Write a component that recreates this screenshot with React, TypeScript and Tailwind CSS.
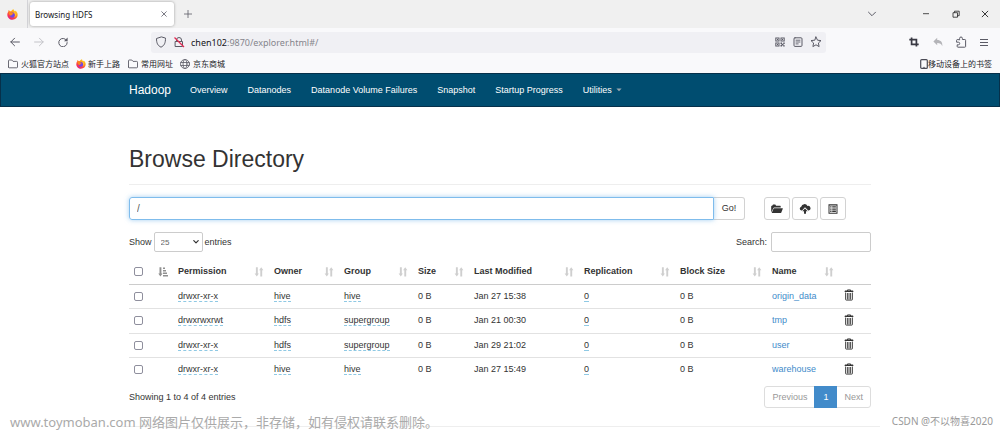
import React, { useState } from "react";

type IconProps = { className?: string };

const line = {
  fill: "none",
  stroke: "currentColor",
  strokeWidth: 1.2,
  strokeLinecap: "round" as const,
  strokeLinejoin: "round" as const,
};

function FirefoxLogo({ className = "size-3" }: IconProps) {
  return (
    <svg viewBox="0 0 24 24" className={className} aria-hidden="true">
      <defs>
        <linearGradient id="fox-body" x1="0.9" y1="0.05" x2="0.25" y2="1">
          <stop offset="0" stopColor="#ffe226" />
          <stop offset="0.35" stopColor="#ff9a1f" />
          <stop offset="0.65" stopColor="#ff4a3d" />
          <stop offset="1" stopColor="#e31587" />
        </linearGradient>
      </defs>
      <path
        fill="url(#fox-body)"
        d="M14.5 0.5c.3 2.3 1.6 3.600 3 5 .8-.3 1-1.200 1-2 3 2.500 4.800 6 4.800 9.300C23.300 19 18.300 23.500 12 23.500S.7 18.800.7 12.500C.7 9.500 1.700 7.200 3 5.500c0-1.200.2-2.300.8-3.200C4.800 3 5.600 4 6 5c1-.3 2-.3 3 0 1-2 3-4 5.500-4.500z"
      />
      <circle cx="11.800" cy="13" r="5.600" fill="#7542e5" />
      <path fill="#ff8a16" d="M3.500 8c2.500-1.300 5-1.200 7 .3 1.200.8 2.800.7 3.500 1.500-.5 1.400-2.700 1.400-3.500 2.700-.5 1.500-1.800 2.300-3.600 1.700C5.500 13 4.500 10.500 3.500 8z" />
      <path fill="#ffd02b" d="M15 6c3.500 1.500 5 5 4 8.500-.6 2-2 3.500-3.500 4.200 2-2.500 2.600-5.500 1.500-8C16.500 9 15.500 7.500 15 6z" />
    </svg>
  );
}

function BackIcon({ className = "size-2.5" }: IconProps) {
  return (
    <svg viewBox="0 0 10 10" className={className} aria-hidden="true">
      <path {...line} strokeWidth="1" d="M9.400 5H.8M4.600 1.200.8 5l3.800 3.800" />
    </svg>
  );
}

function ForwardIcon({ className = "size-2.5" }: IconProps) {
  return (
    <svg viewBox="0 0 10 10" className={className} aria-hidden="true">
      <path {...line} strokeWidth="1" d="M.6 5h8.600M5.400 1.200 9.200 5 5.400 8.800" />
    </svg>
  );
}

function ReloadIcon() {
  return (
    <svg viewBox="0 0 10 10" className="size-2.5" aria-hidden="true">
      <path {...line} strokeWidth="1" d="M8.800 3.800A4.200 4.200 0 1 0 9.200 5.600" />
      <path fill="currentColor" d="M9.600.6v3.600H6z" />
    </svg>
  );
}

function ShieldIcon() {
  return (
    <svg viewBox="0 0 12 12" className="size-3" aria-hidden="true">
      <path {...line} strokeWidth="1" d="M6 1 1.500 2.500c0 4.300 1 7 4.500 8.700 3.500-1.700 4.500-4.400 4.500-8.700z" />
    </svg>
  );
}

function InsecureIcon() {
  return (
    <svg viewBox="0 0 12 12" className="size-3" aria-hidden="true">
      <path {...line} strokeWidth="1" d="M3.500 5.500V4a2.500 2.500 0 0 1 5 0v1.500M2.500 5.500h7v5h-7z" />
      <path d="M1.500 1.500l9.500 9.500" stroke="#e22850" strokeWidth="1.200" />
    </svg>
  );
}

function QrIcon() {
  return (
    <svg viewBox="0 0 10 10" className="size-2.5" aria-hidden="true">
      <path
        fill="currentColor"
        fillRule="evenodd"
        d="M.3.5h4.200v4H.3zM1.300 1.500v2h2.200v-2zM5.500.5h4.200v4H5.500zM6.500 1.500v2h2.200v-2zM.3 5.500h4.200v4H.3zM1.300 6.500v2h2.200v-2zM5.500 5.500H7v1.300h1.300V5.500h1.400v1.500H8.500v1.200h1.200v1.300H8.200V8.500H7v1H5.500V8h1V7h-1z"
      />
      <path fill="currentColor" d="M2 2h1v1H2zM7 2h1v1H7zM2 7h1v1H2z" />
    </svg>
  );
}

function ReaderIcon() {
  return (
    <svg viewBox="0 0 10 10" className="size-2.5" aria-hidden="true">
      <rect {...line} strokeWidth="1" x="1" y=".8" width="8" height="8.600" rx="1" />
      <path {...line} strokeWidth=".9" d="M3 3.200h4M3 5h4M3 6.900h2.200" />
    </svg>
  );
}

function StarIcon() {
  return (
    <svg viewBox="0 0 12 12" className="size-3" aria-hidden="true">
      <path {...line} strokeWidth="1" d="m6 1 1.500 3.200 3.500.4-2.600 2.400.7 3.600L6 8.800l-3.100 1.800.7-3.600L1 4.600l3.500-.4z" />
    </svg>
  );
}

function CropIcon() {
  return (
    <svg viewBox="0 0 10 10" className="size-2.5" aria-hidden="true">
      <path fill="none" stroke="currentColor" strokeWidth="1.700" d="M2.600.5v6.800H9.700M.3 2.600h7.100v7" />
    </svg>
  );
}

function UndoIcon() {
  return (
    <svg viewBox="0 0 10 10" className="size-2.5" aria-hidden="true">
      <path fill="currentColor" d="M4.200.7v2.200c3.600.1 5.500 1.900 5.100 6.400C8.500 7 7 6 4.200 6v2.200L.4 4.400z" />
    </svg>
  );
}

function PuzzleIcon() {
  return (
    <svg viewBox="0 0 12 12" className="size-3" aria-hidden="true">
      <path
        {...line}
        strokeWidth="1"
        d="M4.600 3.500V2.400a1.400 1.400 0 0 1 2.800 0v1.100h2.400q.8 0 .8.8v6.200q0 .7-.8.7H3q-.8 0-.8-.7V8.800h1.200a1.300 1.300 0 0 0 0-2.600H1.600V4.300q0-.8.8-.8z"
      />
    </svg>
  );
}

function MenuIcon() {
  return (
    <svg viewBox="0 0 8 8" className="size-2" aria-hidden="true">
      <path stroke="currentColor" strokeWidth="1" d="M0 1.500h8M0 4.500h8M0 7.500h8" />
    </svg>
  );
}

function FolderIcon() {
  return (
    <svg viewBox="0 0 10 10" className="size-2.5 text-[#5b5b66]" aria-hidden="true">
      <path {...line} strokeWidth=".9" d="M.5 8V1.800q0-.8.8-.8h2.500l1.200 1.400h3.700q.8 0 .8.8V8q0 .8-.8.8H1.300Q.5 8.800.5 8z" />
    </svg>
  );
}

function GlobeIcon() {
  return (
    <svg viewBox="0 0 10 10" className="size-2.5 text-[#5b5b66]" aria-hidden="true">
      <g {...line} strokeWidth=".8">
        <circle cx="5" cy="5" r="4.500" />
        <ellipse cx="5" cy="5" rx="2" ry="4.500" />
        <path d="M.8 3.500h8.400M.8 6.500h8.400" />
      </g>
    </svg>
  );
}

function PhoneIcon() {
  return (
    <svg viewBox="0 0 8 10" className="h-2.5 w-2 text-[#4a4a55]" aria-hidden="true">
      <rect {...line} x=".7" y=".6" width="6.600" height="8.800" rx="1" />
      <path stroke="currentColor" strokeWidth=".8" d="M3.200 8.400h1.600" />
    </svg>
  );
}

function SortIcon() {
  return (
    <svg viewBox="0 0 10 10" className="size-2.5 shrink-0 text-[#cfcfcf]" aria-hidden="true">
      <path fill="currentColor" d="M1.900.3h1.900v6.200h1.100L2.800 9.500.6 6.500h1.300zM6.300 9.500h1.900V3.300h1.200L7.200.3 5.100 3.300h1.200z" />
    </svg>
  );
}

function SortAscIcon() {
  return (
    <svg viewBox="0 0 10 10" className="size-2.5 shrink-0 text-[#909090]" aria-hidden="true">
      <path fill="currentColor" d="M1.500.3h1.900v6.200h1.100L2.400 9.500.3 6.500h1.200zM5 .5h2v1.500H5zM5 3h3v1.500H5zM5 5.500h4V7H5zM5 8h5v1.500H5z" />
    </svg>
  );
}

function FolderOpenIcon() {
  return (
    <svg viewBox="0 0 12 10" className="h-2.5 w-3" aria-hidden="true">
      <path fill="currentColor" d="M.2 8.400V2.200q0-.5.5-.5h.6l.3-.8q.2-.4.6-.4h2q.4 0 .5.4l.3.8h4.200q.5 0 .5.5v1.300H3.200q-.6 0-.8.5z" />
      <path fill="currentColor" d="M3.300 4.300h8.200q.5 0 .3.500L10.300 8.600q-.2.500-.7.500H1.200q-.5 0-.3-.5l1.600-3.800q.2-.5.8-.5z" />
    </svg>
  );
}

function UploadIcon() {
  return (
    <svg viewBox="0 0 12 10" className="h-2.5 w-3" aria-hidden="true">
      <path
        fill="currentColor"
        d="M3 6.600H2.500a2 2 0 0 1-.3-3.900A3.400 3.400 0 0 1 8.500 1.900a2.400 2.400 0 0 1 1.200 4.700H9.200L6 3.200z"
      />
      <path fill="currentColor" d="M6 4.400 8.700 7.200H7v2.500H5V7.200H3.300z" />
    </svg>
  );
}

function ListIcon() {
  return (
    <svg viewBox="0 0 10 10" className="size-2.5" aria-hidden="true">
      <path fill="currentColor" fillRule="evenodd" d="M.5.2h9v9.600h-9zM1.500 1.400v7.400h7V1.400z" />
      <path fill="currentColor" d="M2.200 2.200h1.300v1.300H2.200zM4.200 2.200h3.700v1.300H4.200zM2.200 4.400h1.300v1.300H2.200zM4.200 4.400h3.700v1.300H4.200zM2.200 6.600h1.300v1.300H2.200zM4.200 6.600h3.700v1.300H4.200z" />
    </svg>
  );
}

function TrashIcon() {
  return (
    <svg viewBox="0 0 10 12" className="h-3 w-2.5" aria-hidden="true">
      <path
        fill="none"
        stroke="currentColor"
        strokeWidth=".9"
        d="M3.500 2V.9h3V2M1.600 3.500V10.500q0 .6.600.6h5.600q.6 0 .6-.6V3.500M3.400 4v6.500M5 4v6.500M6.600 4v6.500"
      />
      <path fill="currentColor" d="M1 1.600h8l.5 1.300H.5z" />
    </svg>
  );
}

const navLinks = ["Overview", "Datanodes", "Datanode Volume Failures", "Snapshot", "Startup Progress"];

const columns: { label: string; width: string }[] = [
  { label: "Permission", width: "w-[96px]" },
  { label: "Owner", width: "w-[70px]" },
  { label: "Group", width: "w-[74px]" },
  { label: "Size", width: "w-[56px]" },
  { label: "Last Modified", width: "w-[110px]" },
  { label: "Replication", width: "w-[96px]" },
  { label: "Block Size", width: "w-[92px]" },
  { label: "Name", width: "w-[72px]" },
];

const files = [
  { permission: "drwxr-xr-x", owner: "hive", group: "hive", modified: "Jan 27 15:38", name: "origin_data" },
  { permission: "drwxrwxrwt", owner: "hdfs", group: "supergroup", modified: "Jan 21 00:30", name: "tmp" },
  { permission: "drwxr-xr-x", owner: "hdfs", group: "supergroup", modified: "Jan 29 21:02", name: "user" },
  { permission: "drwxr-xr-x", owner: "hive", group: "hive", modified: "Jan 27 15:49", name: "warehouse" },
];

function BrowserChrome() {
  return (
    <div className="font-['Noto_Sans','Noto_Sans_CJK_SC',sans-serif] text-[#5b5b66]">
      <div className="flex h-7 items-center bg-[#f0f0f0]">
        <div className="flex h-full w-7 items-center border-r border-[#d4d4d8] pl-[7px]">
          <FirefoxLogo className="size-[11px]" />
        </div>
        <div className="ml-[2px] flex h-6 w-36 items-center justify-between rounded-[3px] bg-white pr-[7px] pl-[5px] shadow-[0_0_3px_rgba(0,0,0,0.35)]">
          <span className="text-[8px] text-[#15141a]">Browsing HDFS</span>
          <button aria-label="Close tab">
            <svg viewBox="0 0 6 6" className="size-1.5"><path {...line} strokeWidth=".8" d="m.7.7 4.600 4.600M5.300.7.7 5.300" /></svg>
          </button>
        </div>
        <button aria-label="New tab" className="ml-2.5">
          <svg viewBox="0 0 8 8" className="size-2"><path {...line} strokeWidth=".8" d="M4 .2v7.600M.2 4h7.600" /></svg>
        </button>
        <div className="ml-auto flex items-center pr-[11px]">
          <button aria-label="List all tabs" className="mr-[45px]">
            <svg viewBox="0 0 10 8" className="h-2 w-2.5"><path {...line} strokeWidth="1" d="m1.500 2.200 3.500 3.500 3.500-3.500" /></svg>
          </button>
          <button aria-label="Minimize" className="mr-[22px] text-[#222]">
            <svg viewBox="0 0 8 8" className="size-2"><path stroke="currentColor" strokeWidth=".8" d="M1 3.700h6" /></svg>
          </button>
          <button aria-label="Restore" className="mr-[21px] text-[#222]">
            <svg viewBox="0 0 8 8" className="size-2">
              <path fill="none" stroke="currentColor" strokeWidth=".8" d="M1 2.700h4.500v4.500H1zM2.500 2.700V1.200h4.700v4.500H5.500" />
            </svg>
          </button>
          <button aria-label="Close" className="text-[#222]">
            <svg viewBox="0 0 8 8" className="size-2"><path stroke="currentColor" strokeWidth=".9" d="m.9.900 6.200 6.200M7.100.900.9 7.100" /></svg>
          </button>
        </div>
      </div>

      <div className="flex h-7 items-center bg-[#f9f9fb] pr-3 pl-2.5">
        <button aria-label="Back"><BackIcon /></button>
        <button aria-label="Forward" className="ml-3.5 text-[#c3c3c8]"><ForwardIcon /></button>
        <button aria-label="Reload" className="ml-3.5"><ReloadIcon /></button>
        <div className="ml-[83px] flex h-[21px] flex-1 items-center rounded-[3px] bg-[#f0f0f4] pr-1 pl-1">
          <ShieldIcon />
          <span className="ml-1.5"><InsecureIcon /></span>
          <span className="ml-1.5 flex-1 text-[9px] text-[#85858c]">
            <span className="text-[#15141a]">chen102</span>:9870/explorer.html#/
          </span>
          <button aria-label="QR code"><QrIcon /></button>
          <button aria-label="Reader view" className="ml-2"><ReaderIcon /></button>
          <button aria-label="Bookmark this page" className="ml-[7px]"><StarIcon /></button>
        </div>
        <div className="ml-[83px] flex items-center">
          <button aria-label="Screenshot" className="text-[#3a3a44]"><CropIcon /></button>
          <button aria-label="Undo" className="ml-3.5 text-[#b4b4b8]"><UndoIcon /></button>
          <button aria-label="Extensions" className="ml-3"><PuzzleIcon /></button>
          <button aria-label="Application menu" className="ml-[13px]"><MenuIcon /></button>
        </div>
      </div>

      <div className="flex h-[17px] items-center bg-[#f9f9fb] pr-2 pb-px pl-2 text-[8px] leading-4 text-[#222228]">
        <a href="#" className="flex items-center gap-[3px]"><FolderIcon />火狐官方站点</a>
        <a href="#" className="ml-[7px] flex items-center gap-[2px]"><FirefoxLogo className="size-2.5" />新手上路</a>
        <a href="#" className="ml-2 flex items-center gap-[3px]"><FolderIcon />常用网址</a>
        <a href="#" className="ml-[7px] flex items-center gap-[3px]"><GlobeIcon />京东商城</a>
        <a href="#" className="ml-auto flex items-center"><PhoneIcon />移动设备上的书签</a>
      </div>
    </div>
  );
}

const box = "size-[9px] appearance-none rounded-[2px] border border-[#8f8f9d] bg-white checked:bg-[#428bca] block";
const toolButton = "flex h-[23px] w-[26px] items-center justify-center rounded-[3px] border border-[#d2d2d2] bg-white text-[#333]";
const tip = "border-b border-dashed border-[#8fc9e4]";

export default function App() {
  const [path, setPath] = useState("/");
  const [query, setQuery] = useState("");

  return (
    <div className="relative min-h-screen bg-white font-['Liberation_Sans',Arial,sans-serif] text-[9px] leading-[13px] text-[#333]">
      <BrowserChrome />

      <nav className="border border-[#06304a] bg-[#004d70] text-white">
        <div className="mx-auto flex h-8 max-w-[760px] items-center px-[9px]">
          <a href="#" className="text-[12px]">Hadoop</a>
          <div className="ml-[19px] flex items-center gap-5">
            {navLinks.map((label) => (
              <a key={label} href="#">{label}</a>
            ))}
            <button className="flex items-center gap-1">
              Utilities
              <svg viewBox="0 0 6 4" className="h-1 w-1.5 text-[#9aa7ae]" aria-hidden="true">
                <path fill="currentColor" d="M.4.5h5.200L3 3.300z" />
              </svg>
            </button>
          </div>
        </div>
      </nav>

      <main className="mx-auto max-w-[760px] px-[9px] pt-[39px]">
        <h1 className="border-b border-[#eee] pb-3 text-[23px] leading-[26px]">Browse Directory</h1>

        <div className="mt-3 flex items-center pr-[25px]">
          <form className="flex flex-1" onSubmit={(e) => e.preventDefault()}>
            <input
              autoFocus
              aria-label="Directory path"
              value={path}
              onChange={(e) => setPath(e.target.value)}
              className="relative h-[23px] min-w-0 flex-1 rounded-l-[3px] border border-[#7fbcec] px-[7px] text-[10px] text-[#555] shadow-[0_0_5px_rgba(102,175,233,0.6)] outline-none"
            />
            <button className="h-[23px] w-[31px] rounded-r-[3px] border border-l-0 border-[#d2d2d2]">Go!</button>
          </form>
          <div className="ml-[19px] flex gap-[2px]">
            <button aria-label="Create directory" className={toolButton}><FolderOpenIcon /></button>
            <button aria-label="Upload files" className={toolButton}><UploadIcon /></button>
            <button aria-label="Cut and paste" className={toolButton}><ListIcon /></button>
          </div>
        </div>

        <div className="mt-3 flex items-center justify-between">
          <label className="flex items-center gap-[2px]">
            Show
            <span className="relative flex items-center">
              <select defaultValue="25" className="h-5 w-[49px] appearance-none rounded-[2px] border border-[#ccc] bg-white pl-1.5 text-[8px] text-[#666]">
                <option>25</option>
                <option>50</option>
                <option>100</option>
              </select>
              <svg viewBox="0 0 6 4" className="pointer-events-none absolute right-1 h-1 w-1.5" aria-hidden="true">
                <path {...line} d="m.8.7 2.200 2.200L5.200.7" />
              </svg>
            </span>
            entries
          </label>
          <label className="flex items-center gap-1">
            Search:
            <input
              type="search"
              value={query}
              onChange={(e) => setQuery(e.target.value)}
              className="h-5 w-[100px] rounded-[2px] border border-[#ccc] px-2 outline-none"
            />
          </label>
        </div>

        <table className="mt-1.5 w-full table-fixed border-collapse text-left">
          <thead>
            <tr className="h-[26px] border-b border-[#ccc]">
              <th className="w-[44px] px-[5px] pt-[2px] pb-0">
                <div className="flex items-center justify-between">
                  <input type="checkbox" aria-label="Select all" className={box} />
                  <SortAscIcon />
                </div>
              </th>
              {columns.map(({ label, width }) => (
                <th key={label} className={`${width} px-[5px] pt-[2px] pb-0`}>
                  <div className="flex items-center justify-between whitespace-nowrap">
                    {label}
                    <SortIcon />
                  </div>
                </th>
              ))}
              <th className="w-[32px] p-0" aria-label="Delete" />
            </tr>
          </thead>
          <tbody>
            {files.map((file) => (
              <tr key={file.name} className="border-b border-[#e2e2e2] last:border-b-0 odd:h-6 even:h-[25px]">
                <td className="px-[5px]"><input type="checkbox" aria-label={`Select ${file.name}`} className={box} /></td>
                <td className="px-[5px]"><span className={tip}>{file.permission}</span></td>
                <td className="px-[5px]"><span className={tip}>{file.owner}</span></td>
                <td className="px-[5px]"><span className={tip}>{file.group}</span></td>
                <td className="px-[5px]">0 B</td>
                <td className="px-[5px]">{file.modified}</td>
                <td className="px-[5px]"><span className={tip}>0</span></td>
                <td className="px-[5px]">0 B</td>
                <td className="px-[5px]"><a href="#" className="text-[#428bca]">{file.name}</a></td>
                <td className="px-[5px] pb-[2px]">
                  <button aria-label={`Delete ${file.name}`} className="block"><TrashIcon /></button>
                </td>
              </tr>
            ))}
          </tbody>
        </table>

        <div className="mt-1 flex items-center justify-between">
          <p>Showing 1 to 4 of 4 entries</p>
          <div className="flex h-[22px] items-stretch rounded-[3px] border border-[#ddd] text-[#999]">
            <button className="px-[7px]">Previous</button>
            <button className="-my-px border border-[#428bca] bg-[#428bca] px-2 text-white">1</button>
            <button className="px-[7px]">Next</button>
          </div>
        </div>
      </main>
      <hr className="mx-auto mt-[18px] max-w-[760px] border-[#eee]" />

      <p className="absolute bottom-0 left-[10px] font-['Noto_Sans','Noto_Sans_CJK_SC',sans-serif] text-[13px] leading-[18px] text-[#aaa]">
        www.toymoban.com 网络图片仅供展示，非存储，如有侵权请联系删除。
      </p>
      <p className="absolute right-[7px] bottom-[2px] font-['Noto_Sans','Noto_Sans_CJK_SC',sans-serif] text-[10px] leading-4 text-[#999]">
        CSDN @不以物喜2020
      </p>
    </div>
  );
}
